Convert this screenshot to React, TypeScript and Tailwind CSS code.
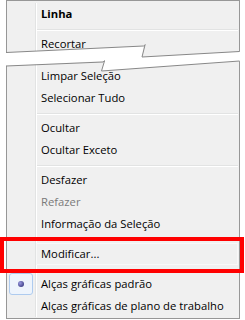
import React from "react";

const font = { fontFamily: '"Open Sans", "Noto Sans", sans-serif' };

function Gutter({ children }: { children?: React.ReactNode }) {
  return (
    <>
      <div className="w-[28px] shrink-0 flex items-center justify-center">{children}</div>
      <div className="w-px shrink-0 bg-[#e2e3e3]" />
      <div className="w-px shrink-0 bg-white" />
    </>
  );
}

function Item({
  text,
  bold,
  disabled,
  icon,
}: {
  text: string;
  bold?: boolean;
  disabled?: boolean;
  icon?: React.ReactNode;
}) {
  return (
    <div className="flex h-[22px]">
      <Gutter>{icon}</Gutter>
      <div
        className={
          "flex-1 flex items-center pl-[4px] text-[11.25px] leading-none whitespace-nowrap " +
          (bold ? "font-bold " : "") +
          (disabled ? "text-[#7a7a7a]" : "text-black")
        }
      >
        {text}
      </div>
    </div>
  );
}

function Sep() {
  return (
    <div className="flex h-[8px]">
      <Gutter />
      <div className="flex-1 pt-[4px] pr-[1px]">
        <div className="h-px bg-[#e2e3e3]" />
        <div className="h-px bg-white" />
      </div>
    </div>
  );
}

export default function App() {
  return (
    <div className="relative w-[245px] h-[320px] bg-white overflow-hidden" style={font}>
      <div className="pl-[6px]">
        <div className="w-[234px] border border-[#979797] bg-[#f0f0f0] pt-[2px] pb-[1px]">
          <Item text="Linha" bold />
          <Sep />
          <Item text="Recortar" />
          <div className="flex h-[10px]">
            <Gutter />
            <div className="flex-1" />
          </div>
          <Item text="Limpar Seleção" />
          <Item text="Selecionar Tudo" />
          <Sep />
          <Item text="Ocultar" />
          <Item text="Ocultar Exceto" />
          <Sep />
          <Item text="Desfazer" />
          <Item text="Refazer" disabled />
          <Item text="Informação da Seleção" />
          <Sep />
          <div className="flex h-[22px]">
            <Gutter />
            <div className="flex-1 flex items-center pl-[4px] text-[11.25px] leading-none text-black border border-[#f8f8f8] mr-[1px] -ml-px">
              Modificar...
            </div>
          </div>
          <Sep />
          <Item
            text="Alças gráficas padrão"
            icon={
              <div className="w-[24px] h-[22px] rounded-[3px] border border-[#aecbef] bg-[#eef4fc] flex items-center justify-center">
                <div className="w-[6px] h-[6px] rounded-full bg-[radial-gradient(circle_at_35%_35%,#9a9ae0,#23236e)]" />
              </div>
            }
          />
          <Item text="Alças gráficas de plano de trabalho" />
        </div>
      </div>

      <svg
        className="absolute left-0 top-0 pointer-events-none"
        width="245"
        height="320"
        viewBox="0 0 245 320"
      >
        <polygon
          points="5,52.5 143.5,46 142,57 241,51.5 241,61 101.5,71 104.5,61 5,66"
          fill="#ffffff"
        />
        <g stroke="#888888" strokeWidth="1" fill="none">
          <polyline points="6,52.5 143.5,46 145.5,44.5" />
          <polyline points="145,45 142,57 239.5,51.5" />
          <polyline points="6,66 103,62 105,60.5" />
          <polyline points="104.5,61 101.5,71 239.5,61" />
        </g>
      </svg>

      <div className="absolute left-0 top-[237px] w-[244px] h-[36px] border-4 border-[#ff0000]" />
    </div>
  );
}
